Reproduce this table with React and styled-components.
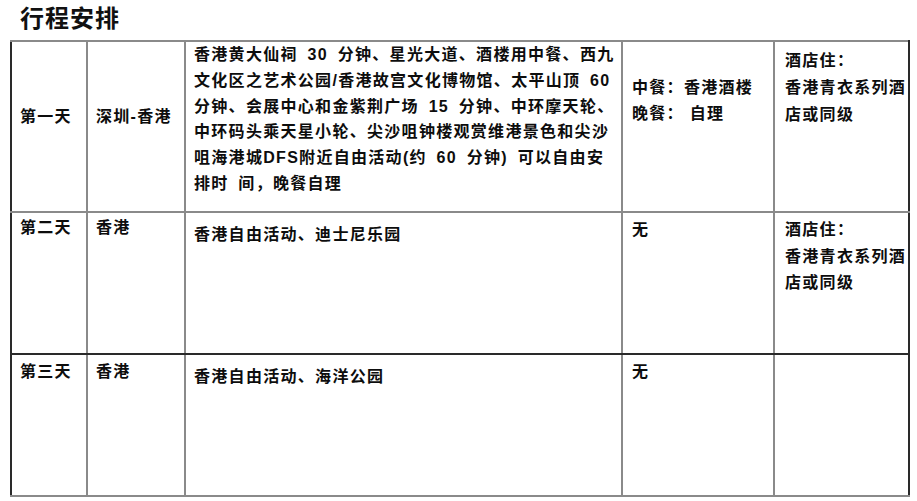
import React from "react";
import styled, { createGlobalStyle } from "styled-components";

const GlobalStyle = createGlobalStyle`
  html, body { margin: 0; padding: 0; background: #ffffff; }
  body { font-family: "Liberation Sans", "Noto Sans CJK SC", sans-serif; color: #000; }
`;

const GRAY = "#8a8a8a";
const DARK = "#2a2a2a";

const Page = styled.div`
  width: 917px;
  height: 501px;
  overflow: hidden;
  background: #fff;
`;

const Title = styled.h2`
  margin: 0;
  padding: 1px 0 7px 20px;
  font-family: "Noto Sans CJK SC", sans-serif;
  font-weight: 700;
  font-size: 24px;
  line-height: 32px;
  letter-spacing: 1px;
  color: #111;
`;

const Schedule = styled.table`
  margin-left: 10px;
  width: 898px;
  table-layout: fixed;
  border-collapse: collapse;
  border-spacing: 0;
`;

const Row = styled.tr`
  height: ${(p) => p.$h}px;
`;

const Cell = styled.td`
  vertical-align: top;
  padding: ${(p) => p.$pt}px 4px 0 ${(p) => p.$pl}px;
  border: 2px solid ${GRAY};
  border-left-color: ${(p) => (p.$first ? DARK : GRAY)};
  border-right-color: ${(p) => (p.$last ? DARK : GRAY)};
  border-top-color: ${(p) => (p.$darkTop ? DARK : GRAY)};
  border-bottom-color: ${(p) => (p.$darkBottom ? DARK : GRAY)};
  font-family: "Liberation Sans", "Noto Sans CJK SC", sans-serif;
  font-weight: 700;
  font-size: 16px;
  line-height: ${(p) => p.$lh || 26}px;
  letter-spacing: 1.3px;
  word-spacing: ${(p) => p.$ws || 0}px;
  color: #0d0d0d;
  overflow: hidden;
`;

const Line = styled.span`
  display: block;
  white-space: pre;
`;

const rows = [
  {
    h: 171,
    cells: [
      { pt: 62, pl: 8, lines: ["第一天"] },
      { pt: 62, pl: 8, lines: ["深圳-香港"] },
      {
        pt: 0,
        pl: 8,
        lh: 25.8,
        ws: 4,
        lines: [
          "香港黄大仙祠 30 分钟、星光大道、酒楼用中餐、西九",
          "文化区之艺术公园/香港故宫文化博物馆、太平山顶 60",
          "分钟、会展中心和金紫荆广场 15 分钟、中环摩天轮、",
          "中环码头乘天星小轮、尖沙咀钟楼观赏维港景色和尖沙",
          "咀海港城DFS附近自由活动(约 60 分钟) 可以自由安",
          "排时 间，晚餐自理",
        ],
      },
      { pt: 33, pl: 9, lines: ["中餐：香港酒楼", "晚餐： 自理"] },
      { pt: 5, pl: 10, lh: 27, lines: ["酒店住：", "香港青衣系列酒", "店或同级"] },
    ],
  },
  {
    h: 142,
    darkBottom: true,
    cells: [
      { pt: 2, pl: 8, lines: ["第二天"] },
      { pt: 2, pl: 8, lines: ["香港"] },
      { pt: 9, pl: 8, lines: ["香港自由活动、迪士尼乐园"] },
      { pt: 4, pl: 9, lines: ["无"] },
      { pt: 4, pl: 10, lh: 26.5, lines: ["酒店住：", "香港青衣系列酒", "店或同级"] },
    ],
  },
  {
    h: 142,
    darkTop: true,
    cells: [
      { pt: 4, pl: 8, lines: ["第三天"] },
      { pt: 4, pl: 8, lines: ["香港"] },
      { pt: 9, pl: 8, lines: ["香港自由活动、海洋公园"] },
      { pt: 4, pl: 9, lines: ["无"] },
      { pt: 4, pl: 10, lines: [] },
    ],
  },
];

const widths = [76, 98, 437, 152, 135];

export default function App() {
  return (
    <Page>
      <GlobalStyle />
      <Title>行程安排</Title>
      <Schedule>
        <colgroup>
          {widths.map((w, i) => (
            <col key={i} style={{ width: w }} />
          ))}
        </colgroup>
        <tbody>
          {rows.map((r, ri) => (
            <Row key={ri} $h={r.h}>
              {r.cells.map((c, ci) => (
                <Cell
                  key={ci}
                  $pt={c.pt}
                  $pl={c.pl}
                  $lh={c.lh}
                  $ws={c.ws}
                  $first={ci === 0}
                  $last={ci === r.cells.length - 1}
                  $darkTop={r.darkTop}
                  $darkBottom={r.darkBottom}
                >
                  {c.lines.map((l, li) => (
                    <Line key={li}>{l}</Line>
                  ))}
                </Cell>
              ))}
            </Row>
          ))}
        </tbody>
      </Schedule>
    </Page>
  );
}
